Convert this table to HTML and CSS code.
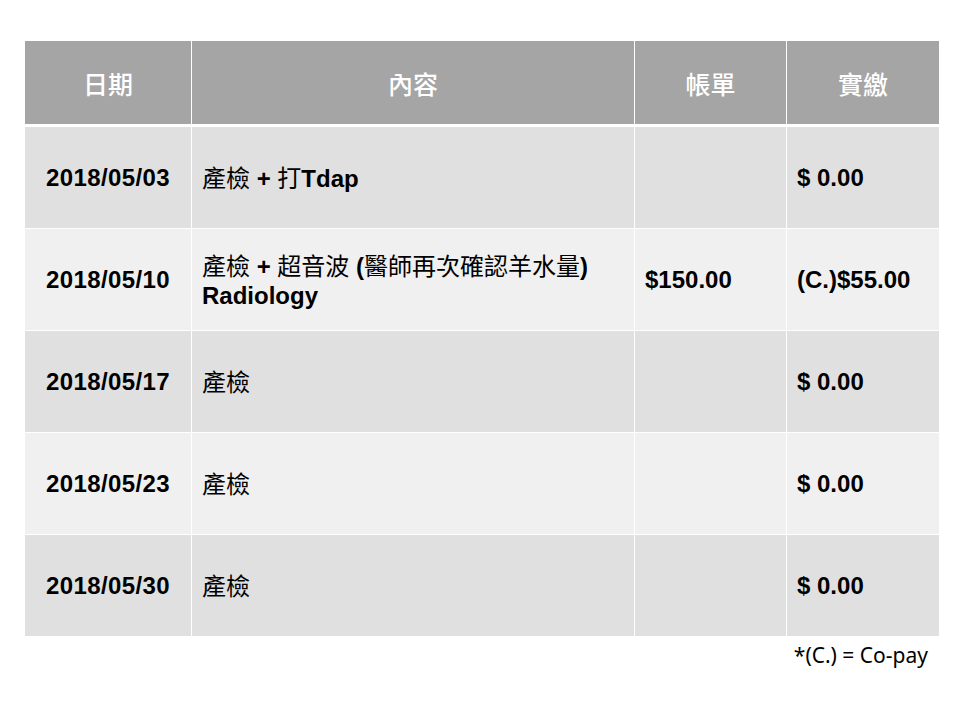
FILE: index.html
```html
<!DOCTYPE html>
<html lang="zh-Hant">
<head>
<meta charset="utf-8">
<link rel="stylesheet" href="styles.css">
</head>
<body>
<div class="slide">
  <div class="table">
    <div class="th">日期</div>
    <div class="th">內容</div>
    <div class="th">帳單</div>
    <div class="th">實繳</div>

    <div class="td date dark">2018/05/03</div>
    <div class="td dark"><div><span class="cjk">產檢</span><b> + </b><span class="cjk">打</span><b>Tdap</b></div></div>
    <div class="td dark"></div>
    <div class="td money dark">$ 0.00</div>

    <div class="td date light">2018/05/10</div>
    <div class="td light"><div><span class="cjk">產檢</span><b> + </b><span class="cjk">超音波</span><b> (</b><span class="cjk">醫師再次確認羊水量</span><b>)</b></div><div><b>Radiology</b></div></div>
    <div class="td money light">$150.00</div>
    <div class="td money light">(C.)$55.00</div>

    <div class="td date dark">2018/05/17</div>
    <div class="td dark"><div><span class="cjk">產檢</span></div></div>
    <div class="td dark"></div>
    <div class="td money dark">$ 0.00</div>

    <div class="td date light">2018/05/23</div>
    <div class="td light"><div><span class="cjk">產檢</span></div></div>
    <div class="td light"></div>
    <div class="td money light">$ 0.00</div>

    <div class="td date dark">2018/05/30</div>
    <div class="td dark"><div><span class="cjk">產檢</span></div></div>
    <div class="td dark"></div>
    <div class="td money dark">$ 0.00</div>
  </div>
  <p class="note">*(C.) = Co-pay</p>
</div>
</body>
</html>
```

FILE: styles.css
```css
html, body {
  margin: 0;
  padding: 0;
  background: #ffffff;
}

.slide {
  width: 960px;
  height: 720px;
  padding: 41px 21px 0 25px;
  box-sizing: border-box;
}

.table {
  display: grid;
  grid-template-columns: 166px 442px 151px 152px;
  grid-template-rows: 85px 101px 101px 101px 101px 101px;
  column-gap: 1px;
  row-gap: 1px;
  background: #ffffff;
  width: 914px;
}

.th {
  background: #a5a5a5;
  color: #ffffff;
  font-family: "Noto Sans CJK TC", "Liberation Sans", sans-serif;
  font-size: 25px;
  font-weight: 500;
  display: flex;
  align-items: center;
  justify-content: center;
  margin-bottom: 2px;
}

.td {
  font-family: "Liberation Sans", "Noto Sans CJK TC", sans-serif;
  font-size: 24px;
  line-height: 29px;
  color: #000000;
  display: flex;
  flex-direction: column;
  justify-content: center;
  padding: 0 10px;
  box-sizing: border-box;
  white-space: nowrap;
}

.td b {
  font-weight: 700;
}

.cjk {
  font-family: "Noto Sans CJK TC", sans-serif;
  font-weight: 400;
}

.date,
.money {
  font-weight: 700;
}

.date {
  align-items: center;
  letter-spacing: 0.4px;
}

.dark {
  background: #e0e0e0;
}

.light {
  background: #f0f0f0;
}

.note {
  margin: 6px 0 0;
  padding-right: 11px;
  text-align: right;
  font-family: "Noto Sans", "Open Sans", sans-serif;
  font-size: 21px;
  line-height: 26px;
  color: #000000;
}
```
